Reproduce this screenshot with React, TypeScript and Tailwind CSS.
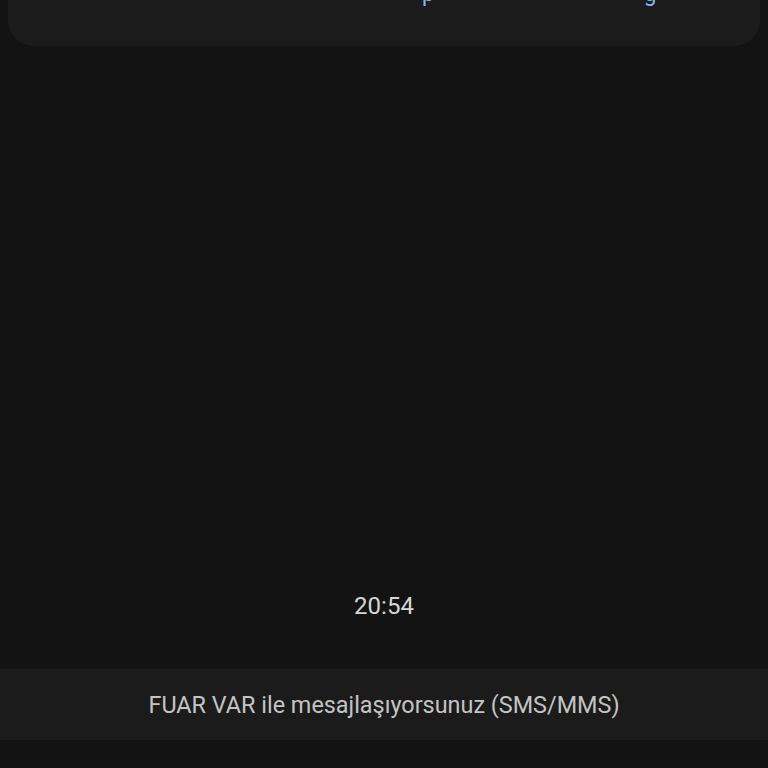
import React from 'react';

const App: React.FC = () => {
    return (
        <div className="h-[768px] w-[768px] overflow-hidden bg-[#131313] flex flex-col" style={{ fontFamily: 'Roboto, "Noto Sans", sans-serif' }}>
            {/* previous message card, cut off at the top */}
            <div className="mx-2 h-[46px] shrink-0 rounded-b-[26px] bg-[#1b1b1b] relative overflow-hidden">
                <div className="absolute left-0 right-0 top-[-17px] text-[22px] leading-[22px] text-[#8ab4f8] whitespace-nowrap">
                    <span className="absolute left-[414px]">p</span>
                    <span className="absolute left-[636px]">g</span>
                </div>
            </div>

            <div className="flex-1 flex flex-col justify-end items-center pb-[49px]">
                <span className="text-[24px] leading-[28px] text-[#d6d6d6]">20:54</span>
            </div>

            <div className="h-[71px] shrink-0 bg-[#1b1b1b] flex items-center justify-center">
                <span className="text-[23.4px] leading-[28px] text-[#c4c4c4]">FUAR VAR ile mesajlaşıyorsunuz (SMS/MMS)</span>
            </div>
            <div className="h-[28px] shrink-0" />
        </div>
    );
};

export default App;
